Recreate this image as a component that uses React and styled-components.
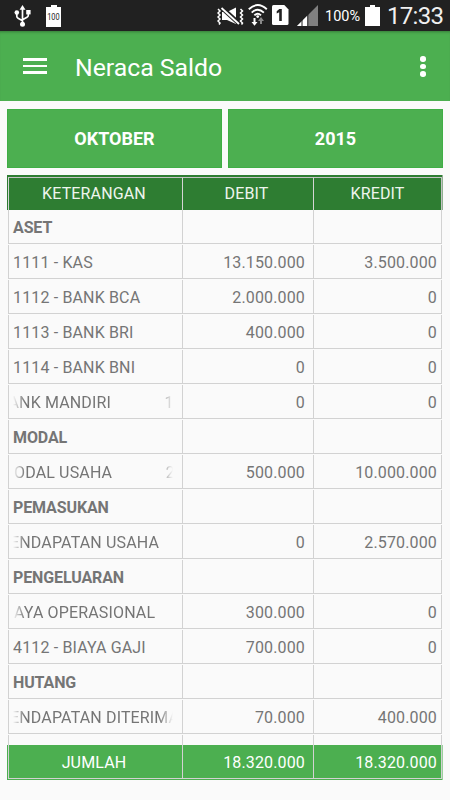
import React from 'react';
import styled, { createGlobalStyle } from 'styled-components';

const rows = [
  { title: 'ASET' },
  { name: '1111 - KAS', debit: '13.150.000', kredit: '3.500.000' },
  { name: '1112 - BANK BCA', debit: '2.000.000', kredit: '0' },
  { name: '1113 - BANK BRI', debit: '400.000', kredit: '0' },
  { name: '1114 - BANK BNI', debit: '0', kredit: '0' },
  { name: 'ANK MANDIRI', shift: -4.5, next: '1', nextGap: 53.5, debit: '0', kredit: '0' },
  { title: 'MODAL' },
  { name: 'ODAL USAHA', shift: 1, next: '2', nextGap: 53.5, debit: '500.000', kredit: '10.000.000' },
  { title: 'PEMASUKAN' },
  { name: 'ENDAPATAN USAHA', shift: -3, debit: '0', kredit: '2.570.000' },
  { title: 'PENGELUARAN' },
  { name: 'AYA OPERASIONAL', shift: 1, debit: '300.000', kredit: '0' },
  { name: '4112 - BIAYA GAJI', debit: '700.000', kredit: '0' },
  { title: 'HUTANG' },
  { name: 'ENDAPATAN DITERIMA', shift: -3, debit: '70.000', kredit: '400.000' },
];

export default function App()
{
  return (
    <Screen>
      <GlobalStyle />
      <StatusBar>
        <UsbIcon />
        <BatteryIcon $left={14}>
          <path d='M5 0h6v2h4v20H0V2h5z' fill='#fff' />
          <text x='7.4' y='15' textAnchor='middle' fontSize='8.5' fontWeight='400' textLength='12.5' lengthAdjust='spacingAndGlyphs' fill='#212121'>100</text>
        </BatteryIcon>
        <Spacer />
        <MuteIcon />
        <WifiIcon />
        <SimIcon />
        <SignalIcon />
        <Percent>100%</Percent>
        <BatteryIcon $left={5}>
          <path d='M5 0h5v2h5v19H0V2h5z' fill='#fff' />
        </BatteryIcon>
        <Clock>17:33</Clock>
      </StatusBar>
      <AppBar>
        <MenuButton>
          <MenuLine />
          <MenuLine />
          <MenuLine />
        </MenuButton>
        <Title>Neraca Saldo</Title>
        <MoreButton>
          <Dot />
          <Dot />
          <Dot />
        </MoreButton>
      </AppBar>
      <Filters>
        <FilterButton>OKTOBER</FilterButton>
        <FilterButton>2015</FilterButton>
      </Filters>
      <Table>
        <Header>
          <HeaderCell>KETERANGAN</HeaderCell>
          <HeaderCell>DEBIT</HeaderCell>
          <HeaderCell>KREDIT</HeaderCell>
        </Header>
        <Body>
          {rows.map((row) => (
            <Row key={row.title || row.name}>
              <Cell>
                {row.title && <Group>{row.title}</Group>}
                {row.name && (
                  <Marquee $moving={row.shift !== undefined}>
                    <Name $shift={row.shift || 0}>{row.name}</Name>
                    {row.next && <Next $gap={row.nextGap}>{row.next}</Next>}
                  </Marquee>
                )}
              </Cell>
              <Cell $number>{row.debit}</Cell>
              <Cell $number>{row.kredit}</Cell>
            </Row>
          ))}
          <Row>
            <Cell />
            <Cell />
            <Cell />
          </Row>
        </Body>
        <Footer>
          <FooterCell>JUMLAH</FooterCell>
          <FooterCell $number>18.320.000</FooterCell>
          <FooterCell $number>18.320.000</FooterCell>
        </Footer>
      </Table>
    </Screen>
  );
}

function UsbIcon()
{
  return (
    <Icon $left={14} $top={5} width='18' height='22' viewBox='0 0 18 22'>
      <g fill='none' stroke='#fff' strokeWidth='1.7'>
        <path d='M8.5 3v16M2.8 8v3.2q0 1.3 1.3 2l4.4 2.6M14.3 8v2.2q0 1.3-1.3 2l-4.5 2.6' />
      </g>
      <path d='M8.5 0l3 4.8h-6z' fill='#fff' />
      <circle cx='2.8' cy='7.5' r='2.3' fill='#fff' />
      <path d='M12.2 5h4.4v4.4h-4.4z' fill='#fff' />
      <circle cx='8.5' cy='19.3' r='2.5' fill='#fff' />
    </Icon>
  );
}

function MuteIcon()
{
  return (
    <Icon $top={7} width='27' height='18' viewBox='0 0 27 18'>
      <path d='M5 5h5l9-4.500v16.500L10 13H5z' fill='#fff' />
      <path d='M4 0l18 16.500' stroke='#212121' strokeWidth='4.500' />
      <path d='M4.500 1L22 17' stroke='#fff' strokeWidth='1.800' />
      <g fill='none' stroke='#fff' strokeWidth='1.500'>
        <path d='M1 2l2 2-2 2 2 2-2 2 2 2-2 2 2 2-1 1.500' />
        <path d='M23.500 2l2 2-2 2 2 2-2 2 2 2-2 2 2 2-1 1.500' />
      </g>
    </Icon>
  );
}

function WifiIcon()
{
  return (
    <Icon $left={4} $top={4} width='20' height='22' viewBox='0 0 20 22'>
      <g fill='none' stroke='#fff' strokeWidth='1.900'>
        <path d='M0.800 5.300Q9.700-3.200 18.800 5.300' />
        <path d='M3.700 8.600Q9.700 2.800 15.900 8.600' />
        <path d='M6.400 11.400Q9.700 8.300 13 11.400' />
      </g>
      <circle cx='9.700' cy='12.600' r='1.400' fill='#fff' />
      <path d='M5.500 14h2v4h2l-3 3.800-3-3.800h2z' fill='#fff' />
      <path d='M12 20v-3h-2l3-4 3 4h-2v3z' fill='#8a8a8a' />
    </Icon>
  );
}

function SimIcon()
{
  return (
    <Icon $left={4} $top={5} width='17' height='20' viewBox='0 0 17 20'>
      <path d='M1.500 0h10.800l4.200 4.500V18.500q0 1.500-1.500 1.500H1.500Q0 20 0 18.500v-17Q0 0 1.500 0z' fill='#fff' />
      <path d='M7.300 4h2.500v12H7.200V7.300L4.700 8.500V6.300z' fill='#212121' />
    </Icon>
  );
}

function SignalIcon()
{
  return (
    <Icon $left={8} $top={5} width='21' height='21' viewBox='0 0 21 21'>
      <path d='M0 21L21 0v21z' fill='#808080' />
      <path d='M0 21l10.500-10.500V21z' fill='#fff' />
      <path d='M5 14v7M10.800 8v13' stroke='#212121' strokeWidth='1' />
    </Icon>
  );
}

const GlobalStyle = createGlobalStyle`
  body {
    margin: 0;
    background-color: #fafafa;
    font-family: Roboto, "Liberation Sans", sans-serif;
  }
  * {
    box-sizing: border-box;
  }
`;

const Screen = styled.main`
  width: 450px;
  height: 800px;
  overflow: hidden;
  background-color: #fafafa;
`;

const StatusBar = styled.div`
  display: flex;
  align-items: flex-start;
  height: 31px;
  padding-right: 7px;
  background-color: #212121;
  color: #fff;
`;

const Icon = styled.svg`
  display: block;
  flex: none;
  margin-left: ${(props) => props.$left || 0}px;
  margin-top: ${(props) => props.$top || 0}px;
`;

const BatteryIcon = styled(Icon).attrs({ $top: 5, width: 15, height: 22, viewBox: '0 0 15 22' })``;

const Spacer = styled.div`
  flex: 1;
`;

const Percent = styled.span`
  width: 35px;
  margin-left: 7px;
  font-size: 14.5px;
  line-height: 33px;
  white-space: nowrap;
`;

const Clock = styled.span`
  width: 56px;
  margin-left: 7px;
  font-size: 24px;
  letter-spacing: -0.7px;
  line-height: 32px;
  color: #f0f0f0;
  white-space: nowrap;
`;

const AppBar = styled.header`
  display: flex;
  align-items: center;
  height: 70px;
  padding: 0 24.5px 0 23px;
  background-color: #4caf50;
  box-shadow: inset 0 3px 3px -2px rgba(0, 0, 0, 0.3);
  color: #fff;
`;

const MenuButton = styled.div`
  display: flex;
  flex-direction: column;
  gap: 4px;
  width: 24px;
`;

const MenuLine = styled.span`
  height: 2.6px;
  background-color: #fff;
`;

const Title = styled.h1`
  flex: 1;
  margin: 0 0 0 28px;
  padding-top: 3px;
  font-size: 24.8px;
  font-weight: 400;
  line-height: 30px;
`;

const MoreButton = styled.div`
  display: flex;
  flex-direction: column;
  gap: 2px;
  padding-top: 1px;
`;

const Dot = styled.span`
  width: 5.5px;
  height: 5.5px;
  border-radius: 50%;
  background-color: #fff;
`;

const Filters = styled.div`
  display: grid;
  grid-template-columns: 215px 215px;
  gap: 6px;
  padding: 8px 7px 7px;
`;

const FilterButton = styled.button`
  height: 59px;
  padding: 0;
  border: 1px solid #3fae45;
  background-color: #4caf50;
  color: #fff;
  font-family: inherit;
  font-size: 18px;
  font-weight: 700;
`;

const Table = styled.section`
  width: 436px;
  margin-left: 7px;
  color: #757575;
  font-size: 16px;
  letter-spacing: 0.15px;
`;

const Row = styled.div`
  display: grid;
  grid-template-columns: 174px 131px 129px;
  height: 35px;
  padding: 0 0 1px 1px;
`;

const Header = styled(Row)`
  padding: 2px 0 0 1px;
  background-color: #2e7d32;
  border-right: 1px solid #8fae90;
`;

const HeaderCell = styled.div`
  display: flex;
  align-items: center;
  justify-content: center;
  padding: 0 3px 1px 0;
  border-top: 1px solid #c4c4c4;
  border-left: 1px solid #d5d5d5;
  color: #eef5ee;
  &:last-child {
    padding-right: 0;
    border-right: 1px solid #c4c4c4;
  }
`;

const Body = styled.div`
  height: 535px;
  overflow: hidden;
`;

const Cell = styled.div`
  display: flex;
  align-items: center;
  justify-content: ${(props) => (props.$number ? 'flex-end' : 'flex-start')};
  padding: ${(props) => (props.$number ? '1px 8px 0 0' : '1px 0 0 4px')};
  border-left: 1px solid #d2d2d2;
  border-bottom: 1px solid #d2d2d2;
  overflow: hidden;
  &:last-child {
    padding-right: 4px;
    border-right: 1px solid #d2d2d2;
  }
`;

const Group = styled.span`
  font-weight: 700;
  letter-spacing: -0.12px;
`;

const Marquee = styled.div`
  display: flex;
  width: 160px;
  overflow: hidden;
  white-space: nowrap;
  mask-image: ${(props) => (props.$moving
    ? 'linear-gradient(to right, transparent, #000 12px, #000 calc(100% - 14px), transparent)'
    : 'none')};
`;

const Name = styled.span`
  flex: none;
  margin-left: ${(props) => props.$shift}px;
`;

const Next = styled.span`
  margin-left: ${(props) => props.$gap}px;
`;

const Footer = styled(Row)`
  padding: 0 0 1px 1px;
  background-color: #4caf50;
  border-right: 1px solid #9bce9d;
`;

const FooterCell = styled(Cell)`
  justify-content: ${(props) => (props.$number ? 'flex-end' : 'center')};
  padding-top: 2px;
  padding-left: 0;
  padding-right: ${(props) => (props.$number ? 8 : 3)}px;
  color: #fff;
`;
